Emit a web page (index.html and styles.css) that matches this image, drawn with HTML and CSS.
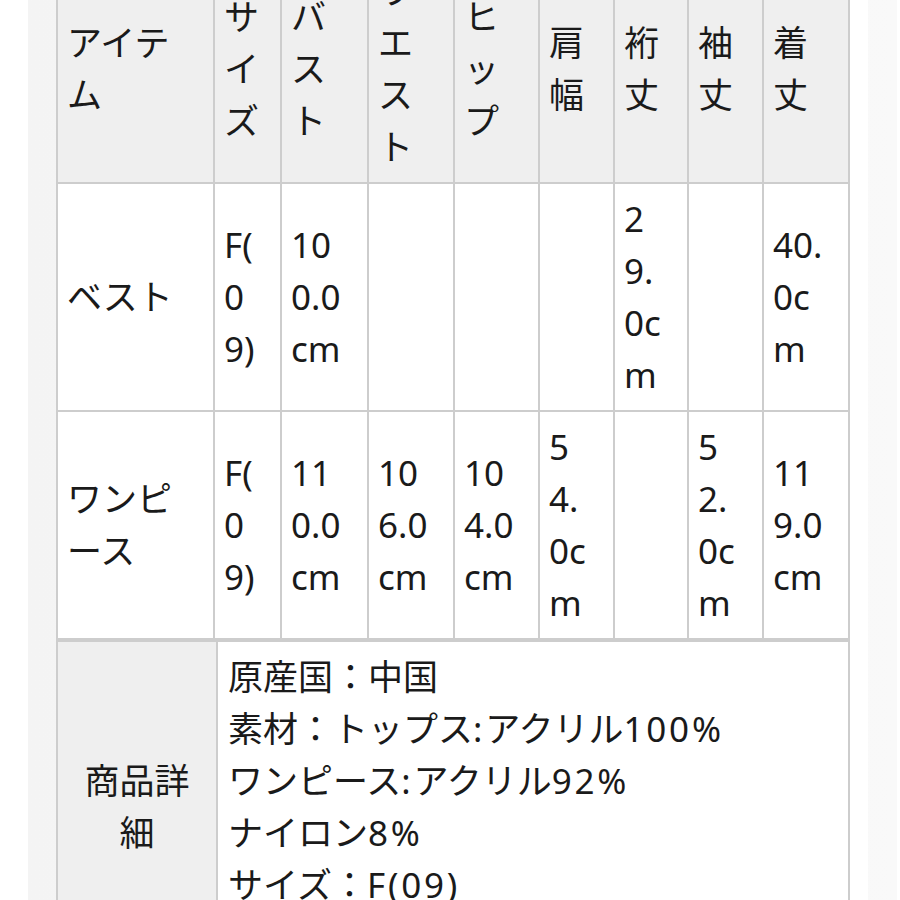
FILE: index.html
```html
<!DOCTYPE html>
<html lang="ja">
<head>
<meta charset="utf-8">
<title>サイズ表</title>
<link rel="stylesheet" href="styles.css">
</head>
<body>
<div class="page">
  <div class="sheet">
    <table class="size-table">
      <colgroup>
        <col class="c-item">
        <col class="c-size">
        <col class="c-bust">
        <col class="c-waist">
        <col class="c-hip">
        <col class="c-shoulder">
        <col class="c-yuki">
        <col class="c-sleeve">
        <col class="c-length">
      </colgroup>
      <thead>
        <tr>
          <th>アイテム</th>
          <th>サイズ</th>
          <th>バスト</th>
          <th>ウエスト</th>
          <th>ヒップ</th>
          <th class="narrow">肩幅</th>
          <th class="narrow">裄丈</th>
          <th class="narrow">袖丈</th>
          <th>着丈</th>
        </tr>
      </thead>
      <tbody>
        <tr>
          <td>ベスト</td>
          <td>F(09)</td>
          <td>100.0cm</td>
          <td></td>
          <td></td>
          <td class="narrow"></td>
          <td class="narrow">29.0cm</td>
          <td class="narrow"></td>
          <td>40.0cm</td>
        </tr>
        <tr>
          <td>ワンピース</td>
          <td>F(09)</td>
          <td>110.0cm</td>
          <td>106.0cm</td>
          <td>104.0cm</td>
          <td class="narrow">54.0cm</td>
          <td class="narrow"></td>
          <td class="narrow">52.0cm</td>
          <td>119.0cm</td>
        </tr>
      </tbody>
    </table>
    <table class="detail-table">
      <colgroup>
        <col class="c-label">
        <col class="c-value">
      </colgroup>
      <tbody>
        <tr class="detail-row">
          <th class="detail-label">商品詳細</th>
          <td class="detail-value">
            <p class="line">原産国：中国</p>
            <p class="line">素材：トップス<span class="latin">:</span>アクリル<span class="latin">100%</span></p>
            <p class="line">ワンピース<span class="latin">:</span>アクリル<span class="latin">92%</span></p>
            <p class="line">ナイロン<span class="latin">8%</span></p>
            <p class="line">サイズ：<span class="latin">F(09)</span></p>
          </td>
        </tr>
      </tbody>
    </table>
  </div>
</div>
</body>
</html>
```

FILE: styles.css
```css
html {
  overflow: hidden;
  background: #ffffff;
}

body {
  margin: 0;
  font-family: "Noto Sans", "Noto Sans CJK JP", sans-serif;
  font-size: 35px;
  line-height: 52px;
  color: #1a1a1a;
}

.page {
  margin-top: -46px;
  margin-left: 28px;
  width: 869px;
  padding-left: 28px;
  box-sizing: border-box;
  background: linear-gradient(to right, #f4f4f4, #f9f9f9);
}

.sheet {
  width: 812px;
  background: #ffffff;
}

.size-table,
.detail-table {
  width: 792px;
  table-layout: fixed;
  border-collapse: collapse;
}

.size-table th,
.size-table td,
.detail-table th,
.detail-table td {
  border: 2px solid #cdcdcd;
  padding: 9px 20px 9px 9px;
  vertical-align: middle;
  text-align: left;
  font-weight: normal;
  overflow-wrap: anywhere;
  word-break: normal;
}

.size-table th {
  background: #efefef;
}

.size-table .narrow {
  padding-right: 25px;
}

.c-item { width: 157px; }
.c-size { width: 67px; }
.c-bust { width: 87px; }
.c-waist { width: 86px; }
.c-hip { width: 85px; }
.c-shoulder { width: 75px; }
.c-yuki { width: 74px; }
.c-sleeve { width: 75px; }
.c-length { width: 86px; }

.c-label { width: 160px; }
.c-value { width: 632px; }

.detail-row {
  height: 332px;
}

.detail-table .detail-label {
  background: #efefef;
  text-align: center;
  padding: 9px 10px;
}

.detail-table .detail-value {
  vertical-align: top;
  padding: 9px 10px;
}

.line {
  margin: 0;
  white-space: nowrap;
}

.latin {
  letter-spacing: 0.08em;
}
```
